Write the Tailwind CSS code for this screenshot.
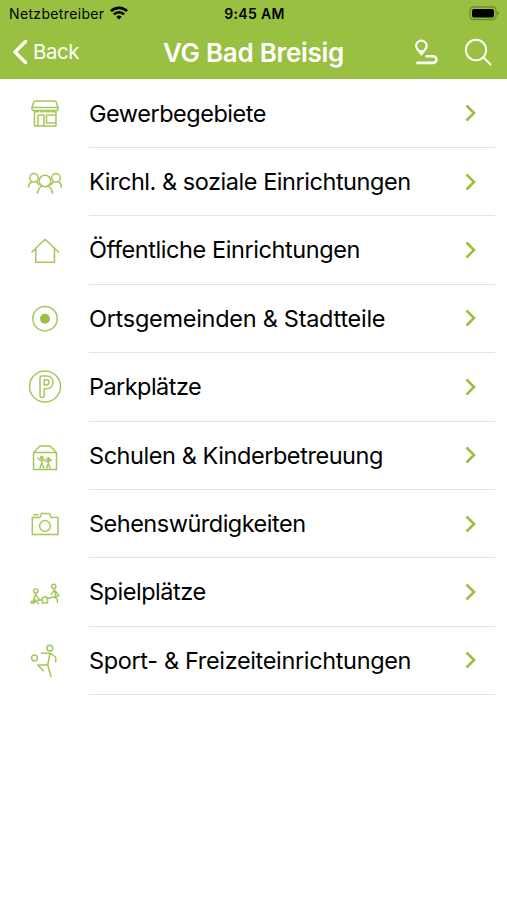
<!DOCTYPE html>
<html lang="de">
<head>
  <meta charset="UTF-8" />
  <meta name="viewport" content="width=device-width, initial-scale=1.0"/>
  <title>VG Bad Breisig</title>
  <script src="https://cdn.jsdelivr.net/npm/@tailwindcss/browser@4"></script>
</head>
<body class="bg-white text-black font-['Inter',sans-serif] h-[900px] overflow-hidden">

  <!-- Header -->
  <header class="h-[79px] bg-[#99c041]">
    <!-- Status bar -->
    <div class="grid grid-cols-3 items-center h-[27px] px-[9px] text-[14px] leading-none">
      <div class="flex items-center gap-[6px]">
        <span class="tracking-[0.35px]">Netzbetreiber</span>
        <svg class="w-[18px] h-[14px] -mt-[2px]" viewBox="0 0 18 14" fill="none" stroke="#000" stroke-width="2.6">
          <path d="M1 5.200a11.300 11.300 0 0 1 16 0"/>
          <path d="M3.900 8.400a7.200 7.200 0 0 1 10.200 0"/>
          <path d="M9 13.600l-2.700-2.800a3.800 3.800 0 0 1 5.400 0z" fill="#000" stroke="none"/>
        </svg>
      </div>
      <div class="text-center font-semibold tracking-[0.35px] pl-[2px]">9:45 AM</div>
      <div class="flex justify-end">
        <svg class="w-[31px] h-[15px] -mr-[1px]" viewBox="0 0 31 15">
          <rect x="2" y="1" width="26" height="12.500" rx="3.500" fill="none" stroke="#6f8b31" stroke-width="1.300"/>
          <rect x="4" y="3" width="22" height="8.500" rx="1.800" fill="#000"/>
          <path d="M29.300 5v4.600c1-.4 1.600-1.200 1.600-2.300S30.300 5.400 29.300 5z" fill="#6f8b31"/>
        </svg>
      </div>
    </div>

    <!-- Navigation bar -->
    <div class="grid grid-cols-[1fr_auto_1fr] items-center h-[50px] text-white">
      <div class="flex items-center pl-[12px] gap-[5px]">
        <svg class="w-4 h-[26px]" viewBox="0 0 16 26" fill="none" stroke="#fff" stroke-width="3.400" stroke-linecap="round" stroke-linejoin="round">
          <path d="M13.500 2.500L3 13l10.500 10.500"/>
        </svg>
        <span class="text-[20.500px] tracking-[-0.5px]">Back</span>
      </div>
      <h1 class="text-[26px] font-semibold tracking-[-0.3px]">VG Bad Breisig</h1>
      <div class="flex items-center justify-end gap-[25px] pr-[15px]">
        <svg class="w-[26px] h-[28px]" viewBox="0 0 26 28" fill="none" stroke="#fff" stroke-width="2.200" stroke-linecap="round">
          <path d="M8.400 16C6 12.900 3.200 10.800 3.200 7.900a5.200 5.200 0 0 1 10.400 0C13.600 10.800 10.800 12.900 8.400 16z"/>
          <path d="M5.500 12.500h5.800L8.400 16.500z" fill="#fff" stroke-width="1"/>
          <path d="M13.500 18.300h6.700a3.300 3.300 0 0 1 0 6.600H4.500" stroke-width="2.600"/>
        </svg>
        <svg class="w-[28px] h-[28px]" viewBox="0 0 28 28" fill="none" stroke="#fff" stroke-width="1.900" stroke-linecap="round">
          <circle cx="12" cy="12" r="10.200"/>
          <path d="M19.500 19.500l7 7"/>
        </svg>
      </div>
    </div>
  </header>

  <!-- Category list -->
  <ul id="list" class="pt-[0.600px]"></ul>

  <script>
    const items = [
      { label: 'Gewerbegebiete', spacing: '-0.48px', icon: `
        <path d="M10.500 7h19c1 0 1.500.5 1.800 1.300l1.700 5.400v1.600c0 .8-.6 1.200-1.300 1.200H8.300c-.7 0-1.300-.4-1.300-1.200v-1.600l1.700-5.400c.3-.8.800-1.300 1.800-1.300z"/>
        <path d="M7.200 13.500h25.600M9.500 16.500v15.500h21.500V16.500M13 31.500V21h6v10.500M21.500 21h9.300M21.500 21v8h9.300"/>
        <path d="M10 17.800h20" stroke-dasharray="3.500 2"/>` },
      { label: 'Kirchl. & soziale Einrichtungen', spacing: '-0.46px', icon: `
        <circle cx="20" cy="19" r="5.800"/>
        <circle cx="9" cy="15.800" r="4.300"/>
        <circle cx="31" cy="15.800" r="4.300"/>
        <path d="M12.500 31c.5-3.200 2.200-5.700 4.500-7.500M27.500 31c-.5-3.200-2.200-5.700-4.500-7.500"/>
        <path d="M3.500 25c.3-2.500 1.400-4.500 3.500-5.500M11.500 19.500l2.500 3.500M36.500 25c-.3-2.500-1.400-4.500-3.500-5.500M28.500 19.500L26 23"/>` },
      { label: 'Öffentliche Einrichtungen', spacing: '-0.42px', icon: `
        <path d="M7 21L20 8.200l13.500 12.800M10.800 17.500v13.800h18.700V17.500"/>` },
      { label: 'Ortsgemeinden & Stadtteile', spacing: '-0.28px', icon: `
        <circle cx="20" cy="19.700" r="12.200"/>
        <circle cx="20" cy="19.700" r="5" fill="#99c041" stroke="none"/>` },
      { label: 'Parkplätze', spacing: '-0.55px', icon: `
        <circle cx="20" cy="19.500" r="15.500"/>
        <path d="M15 11c0-1.200.8-2 2-2h4.500c4 0 6.500 2.600 6.500 6.300s-2.600 6.400-6.500 6.400h-2.300V28.500c0 1.300-.8 2-2.100 2S15 29.800 15 28.500z"/>
        <path d="M19.200 12.800h2.100c1.600 0 2.600 1 2.600 2.500s-1 2.600-2.600 2.600h-2.100z"/>` },
      { label: 'Schulen & Kinderbetreuung', spacing: '-0.44px', icon: `
        <path d="M8.500 16.500h23V33.500h-23zM8.800 16.300l6-6.300h10.400l6 6.300"/>
        <g stroke-width="1.500">
          <circle cx="16.800" cy="21.500" r="1.200" fill="#99c041"/>
          <circle cx="23.300" cy="23" r="1.200" fill="#99c041"/>
          <path d="M12.800 22l2.500 2.300h3l2-1M16.800 23.500v4M16.800 27L15 32M16.800 27l2 5M20.500 25.500l1.500-.3h2.600l1.900-1.500M23.300 25.500v3M23 28l-1.200 4M23.500 28l1.500 4"/>
        </g>` },
      { label: 'Sehenswürdigkeiten', spacing: '-0.5px', icon: `
        <path d="M7.300 13.500h7.700L16.500 9.500h8l1.500 4h7v17H7.300zM9 10.800h4"/>
        <circle cx="20" cy="22" r="5.400"/>` },
      { label: 'Spielplätze', spacing: '-0.47px', icon: `
        <circle cx="10.800" cy="18" r="2.100"/>
        <circle cx="28.800" cy="13.300" r="2.100"/>
        <path d="M10.500 21.200l-1.800 6M10.800 21.700l3.200 4.500M6.500 28.200l5 .5 2 2M5.500 29.700l3.500.5 1.500-3.500M12 27.500l5-.8M22 25.700l12-3.200M17.300 25l2.700-1.500 2.600 1.500v5h-5.300zM29.500 16.700l1 5M29.200 17.200l-3 4.500M30.500 18.200l2.500 3M28.500 24.200l3.500 1 .5 4"/>` },
      { label: 'Sport- & Freizeiteinrichtungen', spacing: '-0.35px', icon: `
        <circle cx="24.800" cy="7.200" r="2.900"/>
        <circle cx="9.500" cy="17" r="2.900"/>
        <path d="M16.500 12.200h8.500l5.700 3.800v5M25 12.200l-2.300 11.800h-10l5.500 5.700M22.700 24l3.300 11.700"/>` }
    ];

    const list = document.getElementById('list');
    items.forEach(item => {
      const li = document.createElement('li');
      li.className = 'flex items-center h-[68.400px] pl-[25px] pr-[12px]';
      li.innerHTML = `
        <svg class="w-10 h-10 mr-[24px] shrink-0" viewBox="0 0 40 40" fill="none" stroke="#a5c85a" stroke-width="1.500" stroke-linecap="round" stroke-linejoin="round">${item.icon}</svg>
        <div class="flex items-center flex-1 h-full border-b border-[#e4e4e4] pr-[19px]">
          <span class="flex-1 text-[23.500px] whitespace-nowrap" style="letter-spacing:${item.spacing}">${item.label.replace('&', '&amp;')}</span>
          <svg class="w-[11px] h-[18px]" viewBox="0 0 11 18" fill="none" stroke="#99c041" stroke-width="2.600">
            <path d="M1.500 1.500L9 9l-7.500 7.500"/>
          </svg>
        </div>`;
      list.appendChild(li);
    });
  </script>
</body>
</html>
